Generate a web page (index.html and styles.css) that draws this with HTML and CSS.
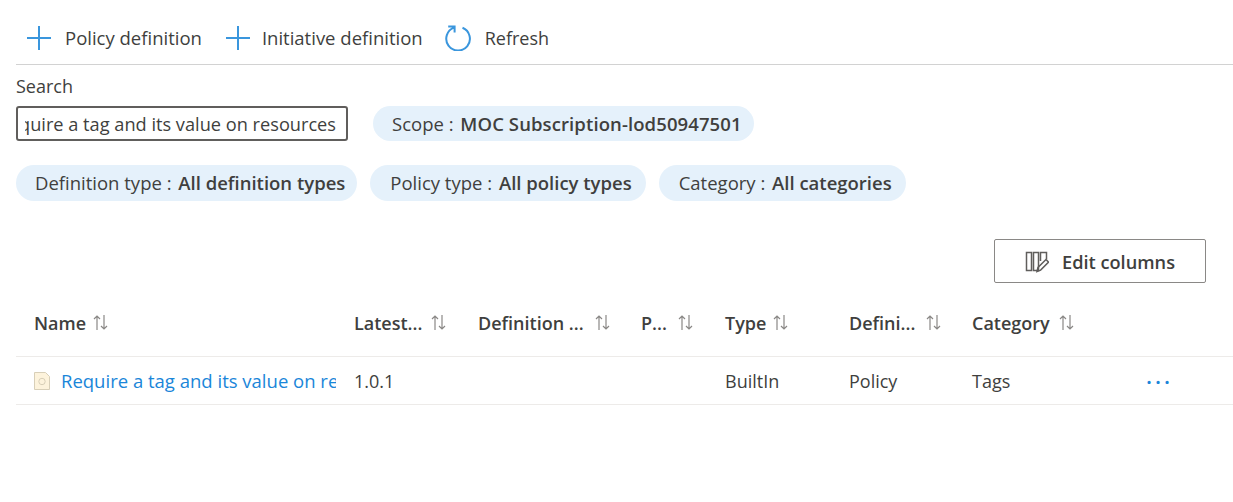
FILE: index.html
```html
<!DOCTYPE html>
<html lang="en">
<head>
    <meta charset="UTF-8">
    <title>Policy definitions</title>
    <link rel="stylesheet" href="styles.css">
</head>
<body>
    <div class="toolbar">
        <div class="tool">
            <svg class="tool-icon" viewBox="0 0 26 26"><path d="M13 1v24M1 13h24"/></svg>
            <span>Policy definition</span>
        </div>
        <div class="tool tool-second">
            <svg class="tool-icon" viewBox="0 0 26 26"><path d="M13 1v24M1 13h24"/></svg>
            <span>Initiative definition</span>
        </div>
        <div class="tool tool-third">
            <svg class="tool-icon" viewBox="0 0 26 26"><path d="M9.2 2.6A11.8 11.8 0 1 0 17.5 2.8M3.2 1.4H9.6V7.4"/></svg>
            <span>Refresh</span>
        </div>
    </div>

    <div class="filters">
        <label class="search-label">Search</label>
        <div class="filter-row">
            <div class="search-box">
                <div class="search-text"><span>Require a tag and its value on resources</span></div>
            </div>
            <div class="chip chip-scope">Scope : <b>MOC Subscription-lod50947501</b></div>
        </div>
        <div class="filter-row chips">
            <div class="chip">Definition type : <b>All definition types</b></div>
            <div class="chip">Policy type : <b>All policy types</b></div>
            <div class="chip">Category : <b>All categories</b></div>
        </div>
    </div>

    <div class="actions">
        <button class="edit-btn">
            <svg class="edit-icon" viewBox="0 0 24 22">
                <path d="M1.5 1.5h5v18h-5zM8.5 1.5h5v18h-5zM15.5 10V1.5h6v7"/>
                <path d="M12 20.5l1-4 8-8 2.6 2.6-8 8z"/>
            </svg>
            Edit columns
        </button>
    </div>

    <div class="grid">
        <div class="row head">
            <div class="head-cell">Name <svg class="sort" viewBox="0 0 15 17"><path d="M4 16V2M1 5l3-3 3 3M11 1v14M8 12l3 3 3-3"/></svg></div>
            <div class="head-cell">Latest... <svg class="sort sort-far" viewBox="0 0 15 17"><path d="M4 16V2M1 5l3-3 3 3M11 1v14M8 12l3 3 3-3"/></svg></div>
            <div class="head-cell">Definition ... <svg class="sort sort-wide" viewBox="0 0 15 17"><path d="M4 16V2M1 5l3-3 3 3M11 1v14M8 12l3 3 3-3"/></svg></div>
            <div class="head-cell">P... <svg class="sort sort-wide" viewBox="0 0 15 17"><path d="M4 16V2M1 5l3-3 3 3M11 1v14M8 12l3 3 3-3"/></svg></div>
            <div class="head-cell">Type <svg class="sort" viewBox="0 0 15 17"><path d="M4 16V2M1 5l3-3 3 3M11 1v14M8 12l3 3 3-3"/></svg></div>
            <div class="head-cell">Defini... <svg class="sort sort-wide" viewBox="0 0 15 17"><path d="M4 16V2M1 5l3-3 3 3M11 1v14M8 12l3 3 3-3"/></svg></div>
            <div class="head-cell">Category <svg class="sort sort-far" viewBox="0 0 15 17"><path d="M4 16V2M1 5l3-3 3 3M11 1v14M8 12l3 3 3-3"/></svg></div>
        </div>
        <div class="row">
            <div class="name-cell">
                <svg class="doc-icon" viewBox="0 0 16 18">
                    <path d="M.5.5h11l4 4v13H.5z"/>
                    <circle cx="8" cy="9.5" r="3.2"/>
                </svg>
                <a class="name-link" href="#">Require a tag and its value on resources</a>
            </div>
            <div>1.0.1</div>
            <div></div>
            <div></div>
            <div>BuiltIn</div>
            <div>Policy</div>
            <div>Tags</div>
            <div class="more">...</div>
        </div>
    </div>
</body>
</html>
```

FILE: styles.css
```css
body {
    font-family: "Open Sans", "Noto Sans", sans-serif;
    font-size: 18.5px;
    color: #403f3e;
    background-color: #ffffff;
    margin: 0;
    padding: 0 0 0 16px;
}

.toolbar {
    display: flex;
    align-items: center;
    height: 65px;
    padding: 11px 0 0 10px;
    border-bottom: 1px solid #d2d2d2;
    box-sizing: border-box;
}

.tool {
    display: flex;
    align-items: center;
    gap: 13px;
    white-space: nowrap;
}

.tool-second {
    gap: 11px;
    margin-left: 23px;
}

.tool-third {
    gap: 14px;
    margin-left: 22px;
    font-size: 18px;
}

.tool-icon {
    width: 26px;
    height: 26px;
    fill: none;
    stroke: #3a96dd;
    stroke-width: 2;
}

.filters {
    padding-top: 9px;
}

.search-label {
    display: block;
    font-size: 18px;
    line-height: 24px;
    margin-bottom: 8px;
}

.filter-row {
    display: flex;
    align-items: flex-start;
    gap: 25px;
}

.chips {
    gap: 13px;
    margin-top: 24px;
}

.search-box {
    width: 332px;
    height: 35px;
    padding: 0 10px 0 7px;
    border: 2.5px solid #605e5c;
    border-radius: 3px;
    box-sizing: border-box;
}

.search-text {
    display: flex;
    justify-content: flex-end;
    font-size: 18.2px;
    line-height: 32px;
    overflow: hidden;
    white-space: nowrap;
}

.search-text span {
    flex-shrink: 0;
}

.chip {
    height: 36px;
    line-height: 36px;
    padding: 0 12px 0 19px;
    background-color: #e5f1fb;
    border-radius: 18px;
    white-space: nowrap;
}

.chip + .chip {
    padding: 0 14px 0 20px;
}

.chip-scope {
    height: 35px;
    line-height: 35px;
}

.chip b {
    margin-left: 2px;
    font-weight: 600;
}

.chip-scope b {
    letter-spacing: 0.1px;
}

.actions {
    display: flex;
    justify-content: flex-end;
    padding: 38px 27px 0 0;
}

.edit-btn {
    display: flex;
    align-items: center;
    justify-content: center;
    gap: 13px;
    width: 212px;
    height: 44px;
    padding-top: 3px;
    font-family: inherit;
    font-size: 18.2px;
    font-weight: 600;
    color: #403f3e;
    background-color: #ffffff;
    border: 1px solid #8a8886;
    border-radius: 2px;
}

.edit-icon {
    width: 24px;
    height: 22px;
    fill: none;
    stroke: #605e5c;
    stroke-width: 1.5;
}

.row {
    display: grid;
    grid-template-columns: 320px 124px 163px 84px 124px 123px 174px 50px;
    align-items: center;
    height: 48px;
    padding-left: 18px;
    font-size: 18px;
    border-bottom: 1px solid #edebe9;
    box-sizing: border-box;
    white-space: nowrap;
}

.head {
    height: 74px;
    padding-top: 6px;
    font-weight: 600;
}

.head-cell {
    display: flex;
    align-items: center;
    gap: 7px;
}

.sort {
    width: 15px;
    height: 17px;
    fill: none;
    stroke: #8a8886;
    stroke-width: 1.2;
}

.sort-far {
    margin-left: 2px;
}

.sort-wide {
    margin-left: 4px;
}

.name-cell {
    display: flex;
    align-items: center;
    gap: 11px;
    width: 302px;
    overflow: hidden;
}

.doc-icon {
    width: 16px;
    height: 18px;
    flex-shrink: 0;
    fill: #fdf3dc;
    stroke: #d8cfb8;
}

.name-link {
    font-size: 18.5px;
    color: #1a86d9;
    text-decoration: none;
}

.more {
    padding-bottom: 11px;
    color: #1a86d9;
    font-size: 22px;
    font-weight: 600;
    letter-spacing: 3px;
    line-height: 20px;
}
```
